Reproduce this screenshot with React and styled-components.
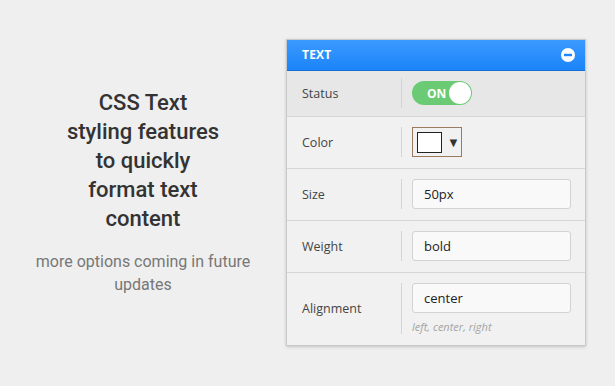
import React from 'react';
import styled, { createGlobalStyle } from 'styled-components';

const GlobalStyle = createGlobalStyle`
  html, body {
    margin: 0;
    padding: 0;
    background: #efefef;
  }
  body {
    font-family: "Open Sans", "Liberation Sans", sans-serif;
  }
`;

const Page = styled.div`
  display: flex;
  align-items: center;
  width: 615px;
  height: 386px;
  padding-bottom: 2px;
  box-sizing: border-box;
`;

const Intro = styled.div`
  width: 286px;
  display: flex;
  flex-direction: column;
  align-items: center;
  text-align: center;
  font-family: Roboto, "Liberation Sans", sans-serif;
`;

const Title = styled.h2`
  margin: 0;
  font-size: 22px;
  font-weight: 500;
  line-height: 29px;
  color: #333;
`;

const Sub = styled.p`
  margin: 17px 0 0;
  width: 240px;
  font-size: 16px;
  line-height: 23px;
  color: #777;
`;

const Panel = styled.div`
  width: 298px;
  border: 1px solid #c9c9c9;
  background: #f1f1f1;
  box-shadow: 0 1px 3px rgba(0, 0, 0, 0.18);
`;

const Header = styled.div`
  height: 30px;
  display: flex;
  align-items: center;
  justify-content: space-between;
  padding: 0 10px 0 15px;
  background: linear-gradient(#3b9aff, #1b84f8);
  border-bottom: 1px solid #1670d8;
  color: #fff;
  font-size: 12px;
  font-weight: 700;
  letter-spacing: 0.2px;
`;

const Row = styled.div`
  display: flex;
  align-items: ${(p) => (p.tall ? 'flex-start' : 'center')};
  height: ${(p) => p.h}px;
  box-sizing: border-box;
  border-bottom: ${(p) => (p.last ? 'none' : '1px solid #d6d6d6')};
  background: ${(p) => (p.dark ? '#e7e7e7' : 'transparent')};
  padding-top: ${(p) => (p.tall ? '10px' : '0')};
`;

const Label = styled.div`
  width: 114px;
  padding-left: 15px;
  box-sizing: border-box;
  font-size: 12.5px;
  color: #444;
  align-self: center;
  margin-top: ${(p) => (p.tall ? '-10px' : '0')};
`;

const Field = styled.div`
  display: flex;
  flex-direction: column;
  border-left: 1px solid #d4d4d4;
  padding-left: 10px;
  min-height: 30px;
  justify-content: center;
`;

const Input = styled.div`
  width: 159px;
  height: 30px;
  box-sizing: border-box;
  border: 1px solid #d2d2d2;
  border-radius: 3px;
  background: #f9f9f9;
  padding: 0 11px;
  display: flex;
  align-items: center;
  font-size: 13px;
  color: #222;
`;

const Hint = styled.div`
  margin-top: 6px;
  font-size: 11px;
  font-style: italic;
  color: #a4a4a4;
`;

const Toggle = styled.div`
  width: 60px;
  height: 24px;
  border-radius: 12px;
  background: #6acb74;
  display: flex;
  align-items: center;
  justify-content: space-between;
  padding: 0 1px 0 15px;
  box-sizing: border-box;
  color: #fff;
  font-size: 12px;
  font-weight: 700;
`;

const Knob = styled.span`
  width: 22px;
  height: 22px;
  border-radius: 50%;
  background: #fff;
`;

const ColorBtn = styled.div`
  width: 50px;
  height: 30px;
  box-sizing: border-box;
  border: 1px solid #9a7b5f;
  display: flex;
  align-items: center;
  padding-left: 4px;
  gap: 5px;
  font-size: 13px;
  color: #333;
`;

const Swatch = styled.span`
  width: 25px;
  height: 21px;
  box-sizing: border-box;
  border: 1px solid #222;
  background: #fff;
`;

const MinusIcon = () => (
  <svg width="14" height="14" viewBox="0 0 14 14">
    <circle cx="7" cy="7" r="7" fill="#fff" />
    <rect x="3" y="5.8" width="8" height="2.4" fill="#1d86f8" />
  </svg>
);

const App = () => (
  <Page>
    <GlobalStyle />
    <Intro>
      <Title>
        CSS Text
        <br />
        styling features
        <br />
        to quickly
        <br />
        format text
        <br />
        content
      </Title>
      <Sub>more options coming in future updates</Sub>
    </Intro>
    <Panel>
      <Header>
        TEXT
        <MinusIcon />
      </Header>
      <Row h={46} dark>
        <Label>Status</Label>
        <Field>
          <Toggle>
            ON
            <Knob />
          </Toggle>
        </Field>
      </Row>
      <Row h={52}>
        <Label>Color</Label>
        <Field>
          <ColorBtn>
            <Swatch />▼
          </ColorBtn>
        </Field>
      </Row>
      <Row h={52}>
        <Label>Size</Label>
        <Field>
          <Input>50px</Input>
        </Field>
      </Row>
      <Row h={52}>
        <Label>Weight</Label>
        <Field>
          <Input>bold</Input>
        </Field>
      </Row>
      <Row h={72} tall last>
        <Label tall>Alignment</Label>
        <Field>
          <Input>center</Input>
          <Hint>left, center, right</Hint>
        </Field>
      </Row>
    </Panel>
  </Page>
);

export default App;
